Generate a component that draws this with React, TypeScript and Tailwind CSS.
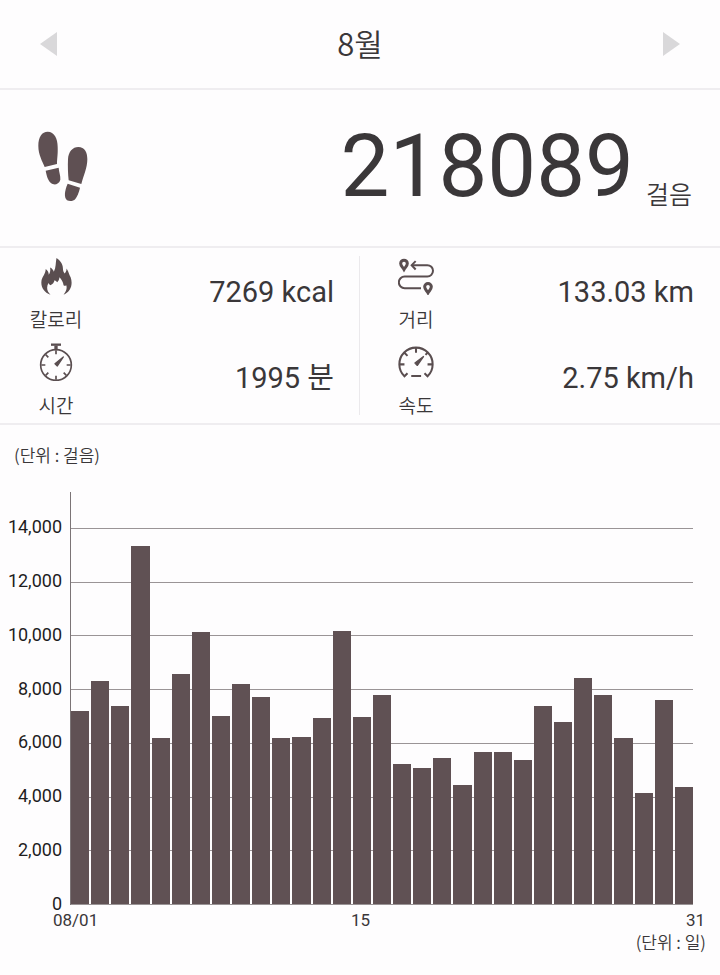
import type { ReactNode } from "react";

const MAX_STEPS = 15340;

const yLabels = ["14,000", "12,000", "10,000", "8,000", "6,000", "4,000", "2,000", "0"];

const dailySteps = [
  7200, 8300, 7380, 13330, 6190, 8570, 10130, 7000, 8200, 7710, 6180, 6220, 6930, 10170, 6950, 7790,
  5200, 5070, 5420, 4440, 5660, 5650, 5370, 7360, 6760, 8400, 7790, 6180, 4120, 7580, 4350,
];

type StatProps = {
  icon: ReactNode;
  label: string;
  value: string;
};

function FootprintsIcon() {
  return (
    <svg viewBox="55 35 150 213" className="h-[71px] w-[50px] fill-[#5f5053]" aria-hidden="true">
      <path d="M75 143C68 126 56 106 56 80C56 52 67 37 84 37C104 37 114 58 114 82C115 105 112 118 112 134Z" />
      <path d="M78 154L117 145C118 159 123 168 122 181C119 192 110 196 102 195C88 192 82 175 78 154Z" />
      <path d="M147 183C145 165 144 140 145 120C146 97 159 83 176 83C195 83 203 98 203 120C203 145 192 168 185 194Z" />
      <path d="M144 193L181 205C178 220 172 232 167 239C161 246 150 247 142 243C132 234 135 213 144 193Z" />
    </svg>
  );
}

function FlameIcon() {
  return (
    <svg viewBox="60 37 92 110" className="h-[37px] w-[31px] fill-[#5a4e50]" aria-hidden="true">
      <path d="M88 146C69 139 60 124 61 108C62 93 73 87 74 70C80 75 83 80 83 87C88 80 88 73 87 65C93 68 97 73 98 78C105 65 103 50 106 37C117 44 125 55 125 67C125 75 127 79 130 83C134 79 136 74 136 68C143 78 143 86 148 94C155 114 150 137 127 146C135 137 138 127 135 118C132 120 129 120 127 118C126 108 121 101 115 94C114 101 112 105 108 109C106 106 103 104 100 103C99 110 95 114 88 118C85 116 83 114 82 111C75 125 78 137 88 146Z" />
    </svg>
  );
}

function StopwatchIcon() {
  return (
    <svg viewBox="54 300 102 114" className="h-[38px] w-[34px] fill-none stroke-[#5a4e50]" strokeWidth="5" aria-hidden="true">
      <circle cx="105" cy="366" r="46" />
      <path d="M90 305H120" strokeWidth="7" />
      <path d="M105 308V320" strokeWidth="10" />
      <path d="M105 322V334M105 398V410M61 366H73M137 366H149M74 335L82 343M74 397L82 389M136 397L128 389" />
      <path d="M102 362L127 342L109 369Z" className="fill-[#5a4e50]" strokeWidth="4" strokeLinejoin="round" />
    </svg>
  );
}

function RouteIcon() {
  return (
    <svg viewBox="54 44 108 110" className="h-[37px] w-[36px] fill-none stroke-[#5a4e50]" strokeWidth="6" aria-hidden="true">
      <path d="M96 65H142A17 17 0 0 1 142 99H74A17 17 0 0 0 74 134H123" />
      <path d="M107 53L95 65L107 78" />
      <path d="M72 78C68 71 62 67 62 60A10 10 0 0 1 82 60C82 67 76 71 72 78Z" strokeWidth="9" />
      <path d="M144 148C140 141 134 137 134 130A10 10 0 0 1 154 130C154 137 148 141 144 148Z" strokeWidth="9" />
    </svg>
  );
}

function GaugeIcon() {
  return (
    <svg viewBox="54 308 106 94" className="h-[32px] w-[36px] fill-none stroke-[#5a4e50]" strokeWidth="6" aria-hidden="true">
      <path d="M82 388L73 397A49 49 0 1 1 141 397L132 388" />
      <path d="M93 396H122M107 314V328M59 362H73M141 362H155M73 328L82 337M141 328L135 334" />
      <path d="M104 358L129 339L111 365Z" className="fill-[#5a4e50]" strokeWidth="4" strokeLinejoin="round" />
    </svg>
  );
}

function Stat({ icon, label, value }: StatProps) {
  return (
    <div className="flex items-center justify-between pr-[26px]">
      <div className="flex w-28 flex-col items-center gap-3.5">
        <div className="flex h-[38px] items-center">{icon}</div>
        <span className="font-[350] text-[19px] leading-6">{label}</span>
      </div>
      <span className="pb-1.5 text-[29px] leading-9">{value}</span>
    </div>
  );
}

function StepChart() {
  return (
    <section className="pt-4 pb-5">
      <p className="px-3.5 font-['Noto_Sans_CJK_KR',sans-serif] text-[17px] leading-7 font-[350]">(단위 : 걸음)</p>

      <div className="mt-[23px] flex h-[413px] pr-[27px]">
        <div className="-mb-[7px] flex w-[70px] flex-col justify-between pt-[27px] pr-2 text-right text-[18px] leading-4 text-[#1f1d1e]">
          {yLabels.map((label) => (
            <span key={label}>{label}</span>
          ))}
        </div>
        <div className="relative flex-1 border-l border-[#7b7476]">
          {/* grid lines sit behind the bars */}
          <div className="absolute inset-x-0 top-9 bottom-0 flex flex-col justify-between">
            {yLabels.map((label) => (
              <div key={label} className="h-px bg-[#9a9496]" />
            ))}
          </div>
          <div className="relative flex h-full items-end gap-0.5 pb-px">
            {dailySteps.map((steps, day) => (
              <div key={day} className="flex-1 bg-[#605154]" style={{ height: `${(steps / MAX_STEPS) * 100}%` }} />
            ))}
          </div>
        </div>
      </div>

      <div className="mt-[7px] flex justify-between pr-[15px] pl-[53px] text-[17px] leading-4">
        <span className="flex-1">08/01</span>
        <span>15</span>
        <span className="flex-1 pl-[37px] text-right">31</span>
      </div>
      <p className="mt-1 pr-3.5 text-right font-['Noto_Sans_CJK_KR',sans-serif] text-[17px] leading-5 font-[350]">(단위 : 일)</p>
    </section>
  );
}

export default function App() {
  return (
    <main className="min-h-screen bg-[#fefdfe] font-['Roboto','Noto_Sans_CJK_KR',sans-serif] text-[#3a3739]">
      <header className="flex h-[90px] items-center justify-between border-b-2 border-[#efedf0] px-10">
        <button type="button" aria-label="이전 달">
          <svg viewBox="0 0 17 24" className="h-6 w-[17px] fill-[#d9d8da]">
            <path d="M17 0V24L0 12Z" />
          </svg>
        </button>
        <h1 className="pb-[3px] font-['Noto_Sans_CJK_KR',sans-serif] text-[31px] leading-10 font-[350]">8월</h1>
        <button type="button" aria-label="다음 달">
          <svg viewBox="0 0 17 24" className="h-6 w-[17px] fill-[#d9d8da]">
            <path d="M0 0V24L17 12Z" />
          </svg>
        </button>
      </header>

      <section className="flex h-[158px] items-center justify-between border-b-2 border-[#efedf0] pr-7 pb-1 pl-[38px]">
        <FootprintsIcon />
        <p className="flex items-end gap-3">
          <span className="text-[87px] leading-[100px]">218089</span>
          <span className="text-[25px] leading-10 font-[350]">걸음</span>
        </p>
      </section>

      <section className="relative grid grid-cols-2 gap-y-2.5 border-b-2 border-[#efedf0] pt-[9px] pb-1">
        <Stat icon={<FlameIcon />} label="칼로리" value="7269 kcal" />
        <Stat icon={<RouteIcon />} label="거리" value="133.03 km" />
        <Stat icon={<StopwatchIcon />} label="시간" value="1995 분" />
        <Stat icon={<GaugeIcon />} label="속도" value="2.75 km/h" />
        <div className="absolute inset-y-2 left-1/2 -ml-px w-px bg-[#ebe9ec]" />
      </section>

      <StepChart />
    </main>
  );
}
